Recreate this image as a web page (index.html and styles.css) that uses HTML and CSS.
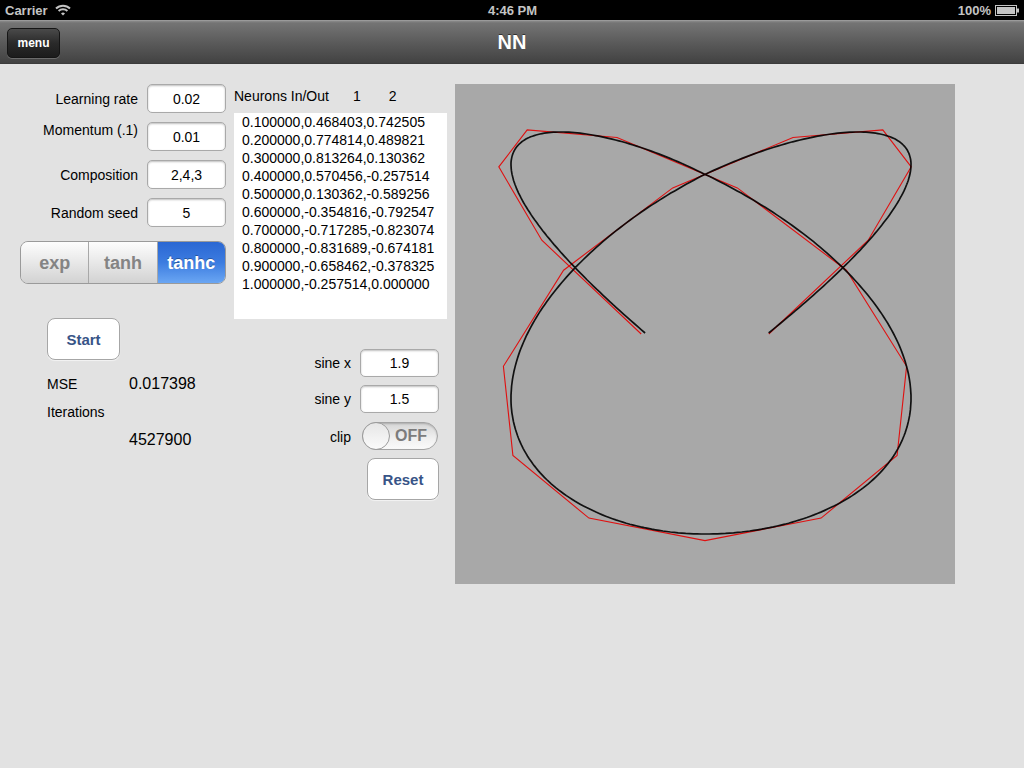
FILE: index.html
```html
<!DOCTYPE html>
<html>
<head>
<meta charset="utf-8">
<title>NN</title>
<link rel="stylesheet" href="styles.css">
</head>
<body>
<div class="statusbar">
  <div class="sb-left">Carrier
    <svg class="wifi" width="16" height="12" viewBox="0 0 16 12">
      <path d="M1 4.5 A10 10 0 0 1 15 4.5" fill="none" stroke="#c4c4c4" stroke-width="2"/>
      <path d="M3.6 7 A6.5 6.5 0 0 1 12.4 7" fill="none" stroke="#c4c4c4" stroke-width="2"/>
      <path d="M6 9.5 L8 11.5 L10 9.5 A3 3 0 0 0 6 9.5 Z" fill="#c4c4c4"/>
    </svg>
  </div>
  <div class="sb-time">4:46 PM</div>
  <div class="sb-right">100%
    <svg class="battery" width="25" height="11" viewBox="0 0 25 11">
      <rect x="0.5" y="0.5" width="21" height="10" fill="none" stroke="#c4c4c4" stroke-width="1"/>
      <rect x="2" y="2" width="18" height="7" fill="#c4c4c4"/>
      <rect x="22" y="3.5" width="2" height="4" fill="#c4c4c4"/>
    </svg>
  </div>
</div>
<div class="navbar">
  <div class="nav-left"><button class="menu-btn">menu</button></div>
  <div class="nav-title">NN</div>
  <div class="nav-right"></div>
</div>
<div class="main">
  <div class="left-col">
    <div class="form">
      <label class="flabel">Learning rate</label><div class="field">0.02</div>
      <label class="flabel flabel-high">Momentum (.1)</label><div class="field">0.01</div>
      <label class="flabel">Composition</label><div class="field">2,4,3</div>
      <label class="flabel">Random seed</label><div class="field">5</div>
    </div>
    <div class="segmented">
      <div class="seg">exp</div>
      <div class="seg">tanh</div>
      <div class="seg seg-on">tanhc</div>
    </div>
    <button class="rbtn start-btn">Start</button>
    <div class="stats">
      <div class="stat-label">MSE</div><div class="stat-value">0.017398</div>
      <div class="stat-label">Iterations</div><div></div>
      <div></div><div class="stat-value">4527900</div>
    </div>
  </div>
  <div class="mid-col">
    <div class="neurons">Neurons In/Out<span class="n1">1</span><span class="n2">2</span></div>
    <div class="datalist">
      <div>0.100000,0.468403,0.742505</div>
      <div>0.200000,0.774814,0.489821</div>
      <div>0.300000,0.813264,0.130362</div>
      <div>0.400000,0.570456,-0.257514</div>
      <div>0.500000,0.130362,-0.589256</div>
      <div>0.600000,-0.354816,-0.792547</div>
      <div>0.700000,-0.717285,-0.823074</div>
      <div>0.800000,-0.831689,-0.674181</div>
      <div>0.900000,-0.658462,-0.378325</div>
      <div>1.000000,-0.257514,0.000000</div>
    </div>
    <div class="sine">
      <label class="slabel">sine x</label><div class="field sfield">1.9</div>
      <label class="slabel">sine y</label><div class="field sfield">1.5</div>
      <label class="slabel clip-label">clip</label>
      <div class="toggle"><div class="knob"></div><span class="off">OFF</span></div>
      <div></div><button class="rbtn reset-btn">Reset</button>
    </div>
  </div>
  <div class="plot">
    <svg id="plotsvg" width="500" height="500" viewBox="0 0 500 500">
      <polyline id="red" fill="none" stroke="#e01010" stroke-width="1.1" stroke-linejoin="miter" points=""/>
      <polyline id="black" fill="none" stroke="#000" stroke-opacity="0.9" stroke-width="1.7" points=""/>
    </svg>
  </div>
</div>
<script src="script.js"></script>
</body>
</html>
```
FILE: styles.css
```css
* { box-sizing: border-box; }
html, body { margin: 0; padding: 0; }
body {
  width: 1024px;
  height: 768px;
  background: #e2e2e2;
  font-family: "Liberation Sans", Arial, sans-serif;
  color: #000;
  overflow: hidden;
}
.statusbar {
  height: 20px;
  background: #000;
  color: #c4c4c4;
  font-size: 13px;
  font-weight: bold;
  display: grid;
  grid-template-columns: 1fr auto 1fr;
  align-items: center;
  padding: 0 4px 0 5px;
}
.sb-left { display: flex; align-items: center; gap: 7px; }
.sb-time { text-align: center; }
.sb-right { display: flex; align-items: center; justify-content: flex-end; gap: 4px; }
.wifi { margin-top: -1px; }
.navbar {
  height: 44px;
  background: linear-gradient(#8a8a8a 0px, #747474 2px, #5a5a5a 22px, #424242 42px, #2a2a2a 44px);
  border-top: 1px solid #9a9a9a;
  display: grid;
  grid-template-columns: 1fr auto 1fr;
  align-items: center;
  padding: 0 7px;
}
.menu-btn {
  width: 53px;
  height: 30px;
  border: 1px solid #151515;
  border-radius: 5px;
  background: linear-gradient(#4a4a4a, #2a2a2a 50%, #1c1c1c);
  color: #fff;
  font-family: "Liberation Sans", Arial, sans-serif;
  font-weight: bold;
  font-size: 12px;
  padding: 0;
  box-shadow: 0 1px 0 rgba(255,255,255,0.2);
}
.nav-title {
  color: #fff;
  font-weight: bold;
  font-size: 20px;
  text-shadow: 0 -1px 0 rgba(0,0,0,0.5);
}
.main {
  display: flex;
  align-items: flex-start;
  padding: 20px 0 0 20px;
}
.left-col { width: 206px; display: flex; flex-direction: column; }
.form {
  display: grid;
  grid-template-columns: 118px 79px;
  column-gap: 9px;
  grid-auto-rows: 29px;
  row-gap: 9px;
  align-items: center;
}
.flabel { text-align: right; font-size: 14px; color: #000; }
.flabel-high { align-self: start; }
.field {
  background: #fff;
  border: 1px solid #a9a9a9;
  border-radius: 5px;
  box-shadow: inset 0 1px 2px rgba(0,0,0,0.25);
  height: 29px;
  display: flex;
  align-items: center;
  justify-content: center;
  font-size: 14px;
}
.segmented {
  margin-top: 14px;
  height: 43px;
  display: flex;
  border: 1px solid #9a9a9a;
  border-radius: 8px;
  overflow: hidden;
}
.seg {
  flex: 1;
  display: flex;
  align-items: center;
  justify-content: center;
  padding-top: 2px;
  font-size: 18px;
  font-weight: bold;
  color: #848484;
  background: linear-gradient(#fdfdfd, #e8e8e8 50%, #d2d2d2);
  border-right: 1px solid #a8a8a8;
}
.seg-on {
  color: #fff;
  border-right: none;
  background: linear-gradient(#2a67d3, #3c7ce0 50%, #6aa6f3);
  text-shadow: 0 -1px 0 rgba(0,0,0,0.3);
}
.rbtn {
  background: #fff;
  border: 1px solid #a6a6a6;
  border-radius: 8px;
  color: #385487;
  font-family: "Liberation Sans", Arial, sans-serif;
  font-weight: bold;
  font-size: 15px;
  padding: 0;
  box-shadow: 0 1px 1px rgba(255,255,255,0.6);
}
.start-btn {
  width: 73px;
  height: 42px;
  margin: 34px 0 0 27px;
}
.stats {
  margin: 14px 0 0 27px;
  display: grid;
  grid-template-columns: 82px auto;
  grid-auto-rows: 20px;
  row-gap: 8px;
  align-items: center;
}
.stat-label { font-size: 14px; }
.stat-value { font-size: 16px; }
.mid-col {
  width: 213px;
  margin-left: 8px;
  display: flex;
  flex-direction: column;
}
.neurons {
  height: 24px;
  line-height: 24px;
  font-size: 14px;
  margin-bottom: 5px;
}
.n1 { margin-left: 24px; }
.n2 { margin-left: 28px; }
.datalist {
  background: #fff;
  height: 206px;
  padding: 0 0 0 8px;
  font-size: 14px;
  line-height: 18px;
}
.sine {
  margin-top: 30px;
  padding-right: 8px;
  display: grid;
  grid-template-columns: auto 79px;
  grid-template-rows: 28px 28px 29px 42px;
  justify-content: end;
  column-gap: 9px;
  row-gap: 8px;
  align-items: center;
}
.slabel { text-align: right; font-size: 14px; }
.sfield { height: 28px; }
.clip-label { margin-top: 2px; }
.toggle {
  position: relative;
  width: 76px;
  height: 28px;
  margin: 1px 0 0 2px;
  border: 1px solid #a4a4a4;
  border-radius: 14px;
  background: linear-gradient(#d6d6d6, #f0f0f0 60%, #fafafa);
  display: flex;
  align-items: center;
  justify-content: flex-end;
  padding-right: 10px;
  box-shadow: inset 0 1px 2px rgba(0,0,0,0.2);
}
.knob {
  position: absolute;
  left: -1px;
  top: -1px;
  width: 28px;
  height: 28px;
  border-radius: 50%;
  border: 1px solid #9c9c9c;
  background: linear-gradient(#e6e6e6, #fbfbfb);
}
.off {
  font-size: 16px;
  font-weight: bold;
  color: #7c7c7c;
}
.reset-btn {
  grid-column: 2;
  justify-self: end;
  width: 72px;
  height: 42px;
}
.plot {
  margin-left: 8px;
  width: 500px;
  height: 500px;
  background: #a8a8a8;
}
.plot svg { display: block; }
```
FILE: script.js
```js
(function () {
  var red = [];
  for (var i = -10; i <= 10; i++) {
    var t = i / 10;
    var x = 250 + 206.6 * Math.sin(1.9 * Math.PI * t);
    var y = 250 + 206.6 * Math.cos(1.5 * Math.PI * t);
    red.push(x.toFixed(1) + "," + y.toFixed(1));
  }
  document.getElementById("red").setAttribute("points", red.join(" "));
  var blk = [];
  var n = 600;
  for (var k = 0; k <= n; k++) {
    var s = -1 + 2 * k / n;
    var sx = Math.sin(1.9 * Math.PI * s);
    var bx = 250 + (sx > 0 ? 206 : 194) * sx;
    var by = 249 + 201 * Math.cos(1.5 * Math.PI * s);
    blk.push(bx.toFixed(1) + "," + by.toFixed(1));
  }
  document.getElementById("black").setAttribute("points", blk.join(" "));
})();
```
